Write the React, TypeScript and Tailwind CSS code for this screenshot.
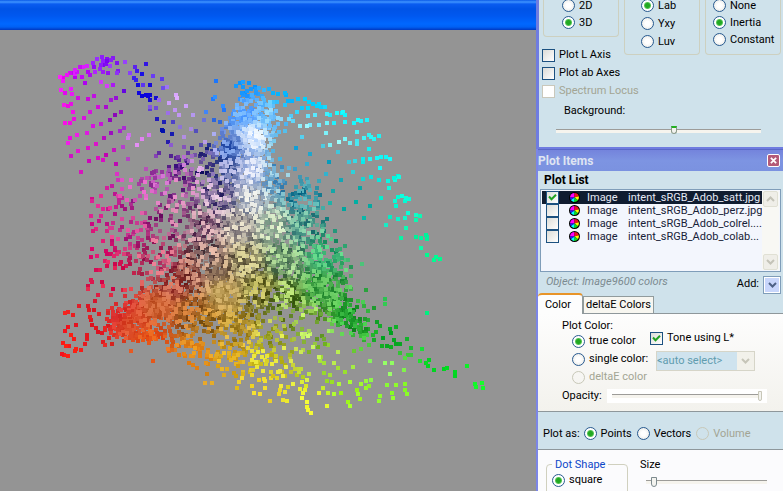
import { useId, useState } from "react";
import type { ReactNode } from "react";

/* ---------- colour cloud ---------- */

// x, y, dark tone, light tone found around that spot of the gamut
type Anchor = [number, number, string, string];
const anchors: Anchor[] = [
  [60, 77, "e800f0", "ff20ff"], [80, 70, "b000f0", "e020ff"], [100, 60, "7a00f0", "9a30ff"], [120, 70, "7000e8", "a050ff"],
  [65, 120, "f000e0", "ff20f0"], [90, 112, "d000d8", "d810e0"], [120, 112, "8000b0", "a010c8"], [110, 84, "9000f0", "f050ff"],
  [140, 80, "0808e0", "8850ff"], [146, 92, "0000d8", "1000e0"], [157, 110, "0000b8", "c080f0"], [176, 100, "d8a0ff", "e0b0ff"],
  [163, 131, "0008a0", "0010b0"], [190, 130, "001898", "f0b8ff"], [176, 158, "200070", "c070d8"], [145, 140, "e080f0", "f0a0ff"],
  [215, 100, "1870ff", "3090ff"], [243, 82, "0090ff", "20a0ff"], [245, 112, "4090ff", "80c0ff"], [253, 138, "b0d0ff", "ffffff"],
  [230, 150, "1840a0", "80a8f0"], [228, 168, "203880", "c8c8f0"], [205, 165, "080858", "f0b8f8"], [272, 115, "58b0f8", "a0e0ff"], [285, 95, "00b0ff", "10c0ff"], [310, 103, "00c8ff", "00e0ff"],
  [345, 115, "00f0ff", "20ffff"], [310, 125, "70e8ff", "a0f8ff"], [290, 150, "0090d0", "10a0d8"], [330, 155, "0098b8", "20a8d0"],
  [335, 143, "80ffff", "a0ffff"], [380, 160, "00f0f0", "20ffff"], [350, 205, "009898", "00b8a8"], [400, 198, "00f8d0", "10ffe0"],
  [425, 237, "00f098", "10ffb0"], [438, 260, "00f888", "00ff98"], [300, 195, "006080", "60b8c0"], [278, 178, "3078b0", "b0e0f0"],
  [252, 170, "90a8e0", "f8f8ff"], [250, 200, "7080a0", "f8f8f0"], [218, 195, "201858", "f0d0e8"], [182, 182, "400868", "f090c8"],
  [145, 185, "802088", "f070d0"], [160, 178, "802088", "e080e0"], [100, 160, "c000b0", "e010c8"], [95, 205, "c80088", "e83098"], [92, 250, "d80068", "f03080"],
  [130, 225, "a01078", "f060a8"], [170, 218, "600058", "f0a0c0"], [200, 225, "401840", "f0c0c8"], [160, 260, "900848", "f08098"],
  [110, 280, "d00048", "f03058"], [65, 340, "f01020", "ff2010"], [95, 325, "d81020", "e82020"], [118, 310, "d02020", "e84040"], [132, 322, "d03818", "e86840"],
  [160, 308, "b84818", "e07848"], [150, 342, "e04010", "f07020"], [175, 285, "801818", "e08068"], [192, 275, "501010", "e0a088"], [208, 258, "382830", "f0c0b0"],
  [215, 270, "503830", "d8b890"], [222, 292, "a08038", "d8b870"], [190, 310, "703808", "e08840"], [240, 225, "686068", "f0e8d0"], [275, 225, "688878", "e8f8d0"],
  [303, 225, "106068", "90d8b0"], [245, 262, "504830", "e8e0a0"], [285, 260, "386048", "b8e8a0"], [325, 255, "108858", "68e090"],
  [260, 290, "404008", "d8d070"], [285, 300, "305008", "c8f080"], [322, 288, "188028", "70d068"], [350, 318, "088018", "50d858"], [390, 342, "00a020", "10b020"],
  [440, 370, "00d020", "00e020"], [480, 385, "00f020", "20ff30"], [205, 322, "704808", "e8a840"], [195, 355, "e07810", "f0a020"],
  [235, 330, "806008", "e8c050"], [230, 360, "d09810", "f8c830"], [265, 360, "c0b010", "f0f040"], [275, 340, "788010", "e8f058"], [260, 390, "f0d020", "f8e838"],
  [310, 405, "f0f020", "f8ff40"], [310, 325, "508018", "d0ff70"], [350, 395, "98f010", "a8ff30"], [400, 392, "80f820", "98ff30"],
  [330, 365, "78c810", "d0f860"], [385, 365, "90ff60", "a0ff70"], [427, 313, "00f080", "00f080"],
];

// x, y, spread x, spread y, rise per unit x, number of dots
type Cloud = [number, number, number, number, number, number];
const clouds: Cloud[] = [
  [247, 96, 6, 7, 0, 20], [257, 110, 12, 10, 0, 62], [272, 122, 6, 11, 0, 24], [251, 136, 12, 14, 0, 165],
  [230, 145, 9, 18, -0.5, 60], [249, 160, 14, 16, 0, 130], [252, 182, 20, 14, 0, 130], [228, 165, 12, 18, 0, 50],
  [212, 185, 18, 18, -0.3, 60], [190, 162, 20, 6, -0.45, 36], [158, 179, 18, 6, -0.2, 28], [175, 208, 34, 24, 0, 85],
  [212, 218, 22, 22, 0, 130], [250, 212, 26, 18, 0, 200], [296, 200, 15, 16, 0, 75], [292, 228, 21, 17, 0, 115],
  [250, 240, 33, 18, 0, 230], [212, 258, 24, 20, 0, 155], [262, 265, 36, 16, 0, 220], [312, 262, 22, 18, 0, 105],
  [232, 286, 30, 16, 0, 200], [220, 291, 12, 12, 0, 120], [287, 286, 30, 14, 0, 180], [322, 292, 18, 15, 0, 90],
  [183, 278, 24, 18, 0, 130], [150, 310, 22, 9, -0.35, 160], [130, 322, 15, 9, -0.2, 75], [122, 308, 11, 12, 0, 16],
  [163, 303, 14, 10, 0, 105], [196, 312, 24, 13, 0, 95], [236, 318, 26, 11, 0, 80], [330, 308, 21, 10, 0.3, 75],
  [355, 326, 14, 6, 0.5, 20], [150, 258, 28, 26, 0, 62], [135, 232, 26, 28, 0, 32], [125, 207, 20, 16, 0, 10],
  [140, 335, 20, 5, 0, 34], [180, 340, 24, 10, 0.3, 46], [208, 356, 24, 12, 0.2, 46], [256, 342, 27, 13, 0, 72],
  [262, 362, 26, 12, 0.2, 60], [300, 330, 24, 10, 0, 30], [280, 382, 28, 10, 0.3, 12], [320, 350, 20, 10, 0, 8],
  [107, 66, 12, 5, 0, 10], [76, 74, 10, 3, -0.4, 4], [142, 83, 10, 8, 0.7, 4],
];

// isolated samples: x, y, x, y, ...
const singles: number[] = [
  60,77,63,78,67,75,70,73,73,73,77,72,80,67,83,67,87,66,93,63,97,59,102,57,107,61,111,60,75,77,82,77,90,75,95,72,100,69,103,65,108,73,117,73,
  125,62,146,64,130,73,135,67,142,74,136,80,138,85,143,85,150,85,153,76,162,79,163,88,167,87,85,83,101,82,107,86,113,85,124,91,61,90,65,93,
  71,89,72,94,78,98,88,99,94,96,111,100,116,98,64,105,68,106,71,104,73,112,90,112,98,107,106,107,115,115,121,112,74,119,84,118,65,123,70,123,
  110,120,101,124,93,126,87,133,77,135,70,138,68,143,104,138,111,133,120,131,124,128,129,135,142,139,149,135,128,138,137,145,96,144,88,148,
  78,151,71,156,98,158,106,155,114,150,123,147,89,161,103,160,128,159,116,164,81,172,139,93,142,96,146,95,148,96,150,107,150,109,156,108,156,98,159,100,
  169,103,176,95,177,98,175,110,168,113,157,119,164,122,173,122,179,115,186,106,193,115,180,127,191,129,196,131,163,131,162,130,172,134,184,137,
  168,142,171,145,184,147,192,148,176,158,178,157,171,156,159,153,156,156,216,81,213,99,215,97,223,106,224,110,206,112,204,120,214,120,234,111,
  236,86,205,142,201,145,118,180,117,174,131,180,107,188,112,186,122,189,115,194,118,196,101,196,92,199,98,206,
  236,86,243,82,240,83,249,83,255,87,259,88,264,90,269,89,273,93,278,94,285,93,286,95,288,101,292,101,298,99,305,99,309,102,313,104,317,106,
  321,107,325,107,319,104,285,105,302,108,308,108,297,112,291,116,289,119,293,121,286,124,300,126,307,126,310,125,319,125,327,123,334,123,
  308,116,315,115,327,114,330,115,337,113,342,113,345,115,343,112,345,122,354,123,358,120,361,121,367,120,357,132,364,138,369,135,371,137,374,139,
  379,136,357,141,357,144,350,143,345,139,339,142,330,145,323,146,326,133,302,137,285,131,296,148,310,154,338,152,369,149,329,162,307,164,
  349,162,355,161,363,159,363,162,370,159,377,158,381,157,386,157,390,159,380,168,353,172,326,174,295,169,289,168,319,181,301,181,341,180,
  363,179,371,177,379,180,388,181,394,178,398,176,395,180,399,177,389,188,360,188,333,191,320,195,381,198,330,203,356,202,370,206,344,209,318,206,
  396,206,395,201,398,197,402,196,406,198,409,199,405,201,364,218,390,217,398,219,405,218,408,213,416,215,420,216,416,220,386,225,406,228,
  401,238,416,237,421,238,427,237,427,239,426,235,421,248,427,255,434,260,436,257,440,259,324,225,324,231,335,231,345,246,331,239,362,264,
  351,267,332,250,427,313,385,299,385,304,374,308,363,302,366,290,354,310,365,319,377,322,380,326,390,329,396,327,391,333,376,332,366,329,
  351,333,360,332,367,335,364,340,374,340,383,338,394,340,400,344,396,344,391,347,387,346,382,346,369,345,361,349,407,339,411,348,422,349,
  400,353,405,358,408,355,411,355,420,361,426,363,429,360,428,366,434,370,444,369,447,368,455,372,455,376,467,366,475,384,476,387,482,383,
  483,388,354,351,338,352,370,361,385,363,392,363,404,370,390,374,387,385,396,385,405,384,405,390,407,394,392,393,393,398,380,396,379,401,
  371,380,366,381,361,384,369,386,366,388,357,390,358,394,360,399,350,382,341,393,334,394,328,393,323,388,319,393,332,382,339,384,345,372,
  338,368,353,367,324,373,330,375,334,363,320,361,319,357,324,363,327,406,348,402,350,406,307,402,307,407,308,410,311,413,302,398,305,390,
  300,389,306,386,303,377,309,374,288,387,280,390,279,394,283,400,287,401,270,401,260,394,254,393,237,388,239,382,259,380,252,386,212,383,205,383,
  62,354,64,355,68,356,75,351,76,349,81,350,63,343,66,346,69,346,74,339,71,335,87,335,87,339,85,344,65,331,68,327,76,325,73,315,65,313,68,312,
  79,306,88,306,95,301,98,295,88,286,88,289,91,280,92,282,102,282,96,270,100,270,107,266,91,257,97,256,92,249,106,251,114,256,120,264,112,244,
  103,241,112,237,93,231,92,224,91,216,101,216,99,221,92,201,103,209,110,208,116,207,107,231,112,228,113,223,115,214,119,252,118,239,125,249,
  130,244,128,230,133,234,89,310,94,310,90,317,91,320,92,325,96,328,98,332,102,333,99,314,103,342,105,345,112,344,131,351,153,361,
];

function makeRandom(seed: number) {
  let s = seed;
  return () => {
    s = (s * 1664525 + 1013904223) % 4294967296;
    return s / 4294967296;
  };
}

const channels = (hex: string) => [0, 2, 4].map((i) => parseInt(hex.slice(i, i + 2), 16));
const parsed = anchors.map(([x, y, dark, light]) => ({ x, y, dark: channels(dark), light: channels(light) }));

function tone(x: number, y: number, t: number, soft: number) {
  const sum = [0, 0, 0];
  let total = 0;
  for (const a of parsed) {
    const d = (a.x - x) ** 2 + (a.y - y) ** 2 + soft;
    const w = 1 / (d * d);
    total += w;
    for (let i = 0; i < 3; i++) sum[i] += w * (a.dark[i] + (a.light[i] - a.dark[i]) * t);
  }
  return `rgb(${sum.map((v) => Math.round(v / total)).join(",")})`;
}

type Dot = { x: number; y: number; fill: string; depth: number };

function buildDots(): Dot[] {
  const rnd = makeRandom(9600);
  const bell = () => (rnd() + rnd() - 1) * 1.9;
  const dots: Dot[] = [];
  const crowded = (x: number, y: number) => dots.some((d) => Math.abs(d.x - x) < 2 && Math.abs(d.y - y) < 2);
  for (let i = 0; i < singles.length; i += 2) {
    const t = rnd();
    dots.push({ x: singles[i], y: singles[i + 1], fill: tone(singles[i], singles[i + 1], t, 12), depth: rnd() + t * 0.6 });
  }
  for (const [cx, cy, sx, sy, slope, n] of clouds) {
    for (let i = 0; i < n; i++) {
      let x = 0;
      let y = 0;
      for (let attempt = 0; attempt < 5; attempt++) {
        const dx = bell() * sx;
        x = Math.round(cx + dx);
        y = Math.round(cy + bell() * sy + dx * slope);
        if (!crowded(x, y)) break;
      }
      const bright = rnd() < 0.2;
      const t = bright ? 0.85 + rnd() * 0.15 : rnd() * 0.7;
      dots.push({ x, y, fill: tone(x, y, t, 60), depth: rnd() + (bright ? 0.7 : t * 0.3) });
    }
  }
  return dots.sort((a, b) => a.depth - b.depth);
}

const dots = buildDots();

function GamutPlot() {
  return (
    <svg width="500" height="430" viewBox="0 30 500 430" shapeRendering="crispEdges" role="img" aria-label="Gamut plot" className="block">
      {dots.map((d, i) => (
        <rect key={i} x={d.x - 2} y={d.y - 2} width="4" height="4" fill={d.fill} />
      ))}
    </svg>
  );
}

/* ---------- controls ---------- */

function Radio({ name, label, checked, disabled }: { name: string; label: string; checked?: boolean; disabled?: boolean }) {
  return (
    <label className={`flex items-center gap-1 whitespace-nowrap ${disabled ? "text-[#a3a594]" : ""}`}>
      <input
        type="radio"
        name={name}
        defaultChecked={checked}
        disabled={disabled}
        className="size-[13px] shrink-0 appearance-none rounded-full border border-[#285a90] bg-[radial-gradient(circle,#fff_30%,#e4e4de)] checked:bg-[radial-gradient(circle,#22a822_0_2px,#55c455_3px,#fff_4px)] disabled:border-[#c8c8b8] disabled:bg-none"
      />
      {label}
    </label>
  );
}

function Tick({ label, checked, disabled }: { label: ReactNode; checked?: boolean; disabled?: boolean }) {
  const [on, setOn] = useState(!!checked);
  return (
    <label className={`flex items-center gap-1 whitespace-nowrap ${disabled ? "text-[#a3a594]" : ""}`}>
      <span className="relative flex size-[13px] shrink-0">
        <input
          type="checkbox"
          checked={on}
          disabled={disabled}
          onChange={(e) => setOn(e.target.checked)}
          className="size-[13px] appearance-none border border-[#1c5180] bg-linear-to-br from-[#dcdcd7] to-white disabled:border-[#cac8bb] disabled:from-white"
        />
        {on && (
          <svg viewBox="0 0 13 13" className="pointer-events-none absolute inset-0" fill="none" stroke="#21a121" strokeWidth="2">
            <path d="M3 5.5l2.500 2.700L10 3.700" />
          </svg>
        )}
      </span>
      {label}
    </label>
  );
}

function Chevron({ color = "#4d6185", up = false }: { color?: string; up?: boolean }) {
  return (
    <svg width="9" height="6" viewBox="0 0 9 6" fill="none" stroke={color} strokeWidth="2">
      <path d={up ? "M1 5l3.5-3.5L8 5" : "M1 1l3.5 3.5L8 1"} />
    </svg>
  );
}

const slider =
  "h-3 appearance-none bg-transparent [&::-webkit-slider-runnable-track]:h-1 [&::-webkit-slider-runnable-track]:border-t [&::-webkit-slider-runnable-track]:border-[#9d9c99] [&::-webkit-slider-runnable-track]:bg-[#f6f4ee] [&::-webkit-slider-thumb]:appearance-none [&::-webkit-slider-thumb]:-mt-1 [&::-webkit-slider-thumb]:rounded-b-full [&::-webkit-slider-thumb]:border [&::-webkit-slider-thumb]:bg-[#f3f3ef]";

function ColorWheel() {
  return (
    <svg width="11" height="11" viewBox="0 0 11 11" className="shrink-0" aria-hidden="true">
      <circle cx="5.5" cy="5.5" r="5.5" fill="#000" />
      <path d="M5.500 5.500L1 5.500A4.500 4.500 0 0 1 5.500 1Z" fill="#f0f" />
      <path d="M5.500 5.500L5.500 1A4.500 4.500 0 0 1 9.800 4.200Z" fill="#f01020" />
      <path d="M5.500 5.500L9.800 4.200A4.500 4.500 0 0 1 9 8.300Z" fill="#ff0" />
      <path d="M5.500 5.500L9 8.300A4.500 4.500 0 0 1 5 10Z" fill="#10e020" />
      <path d="M5.500 5.500L5 10A4.500 4.500 0 0 1 1.800 8Z" fill="#0ff" />
      <path d="M5.500 5.500L1.800 8A4.500 4.500 0 0 1 1 5.500Z" fill="#22f" />
    </svg>
  );
}

const items = [
  { file: "intent_sRGB_Adob_satt.jpg", on: true },
  { file: "intent_sRGB_Adob_perz.jpg", on: false },
  { file: "intent_sRGB_Adob_colrel....", on: false },
  { file: "intent_sRGB_Adob_colab...", on: false },
];

/* ---------- panels ---------- */

function ViewPanel() {
  return (
    <section className="h-[149px] border-b-2 border-l-3 border-[#6f7ce0] bg-[#cfe2eb] pl-[3px]">
      <div className="flex items-start gap-[5px] pl-px leading-[13px]">
        <fieldset className="h-[37px] w-[76px] rounded-b border border-t-0 border-[#cdd0c0] pl-[18px]">
          <div className="-mt-px flex flex-col gap-1">
            <Radio name="dim" label="2D" />
            <Radio name="dim" label="3D" checked />
          </div>
        </fieldset>
        <fieldset className="h-[55px] w-[76px] rounded-b border border-t-0 border-[#cdd0c0] pl-4">
          <div className="-mt-px flex flex-col gap-[5px]">
            <Radio name="space" label="Lab" checked />
            <Radio name="space" label="Yxy" />
            <Radio name="space" label="Luv" />
          </div>
        </fieldset>
        <fieldset className="h-[55px] w-[76px] rounded-b border border-t-0 border-[#cdd0c0] pl-[7px]">
          <div className="-mt-px flex flex-col gap-1">
            <Radio name="motion" label="None" />
            <Radio name="motion" label="Inertia" checked />
            <Radio name="motion" label="Constant" />
          </div>
        </fieldset>
      </div>
      <div className="-mt-2 flex w-fit flex-col gap-[2px]">
        <Tick label="Plot L Axis" />
        <Tick label="Plot ab Axes" />
        <Tick label="Spectrum Locus" disabled />
      </div>
      <label className="mt-1 flex flex-col gap-1">
        <span className="pl-[22px]">Background:</span>
        <input
          type="range"
          defaultValue={58}
          className={`${slider} ml-[14px] w-[205px] [&::-webkit-slider-runnable-track]:mt-1 [&::-webkit-slider-thumb]:h-2 [&::-webkit-slider-thumb]:w-[6px] [&::-webkit-slider-thumb]:border-t-2 [&::-webkit-slider-thumb]:border-[#8a9a8a] [&::-webkit-slider-thumb]:border-t-[#21b121]`}
        />
      </label>
    </section>
  );
}

function PlotList() {
  return (
    <div className="h-[123px] bg-[#cfe2eb] pl-[2px]">
      <h2 className="pl-1 text-xs leading-[18px] font-bold">Plot List</h2>
      <div className="flex h-[83px] w-[241px] border border-[#7f9db9] bg-[#f3f6fd] p-px">
        <ul className="min-w-0 flex-1">
          {items.map((it, i) => (
            <li key={it.file} className={`flex h-[13px] items-center pl-1 ${i === 0 ? "bg-[#101c30] text-[#e4e8f4]" : "text-[#182238]"}`}>
              <Tick
                checked={it.on}
                label={
                  <>
                    <span className="ml-[6px] flex">
                      <ColorWheel />
                    </span>
                    <span className="ml-[3px] w-[37px]">Image</span>
                    {it.file}
                  </>
                }
              />
            </li>
          ))}
        </ul>
        <div className="flex w-[17px] shrink-0 flex-col items-center justify-between bg-[#f8f8f4]">
          <button aria-label="Scroll up" className="grid h-4 w-[15px] place-items-center rounded-xs border border-[#e0e0d4] bg-[#efeee8]">
            <Chevron color="#c4c3b8" up />
          </button>
          <button aria-label="Scroll down" className="grid h-4 w-[15px] place-items-center rounded-xs border border-[#e0e0d4] bg-[#efeee8]">
            <Chevron color="#c4c3b8" />
          </button>
        </div>
      </div>
      <div className="flex items-start justify-between pr-[2px] pl-[6px]">
        <em className="pt-[2px] text-[#7c8a90]">Object: Image9600 colors</em>
        <div className="flex items-start gap-1 pt-1">
          <span>Add:</span>
          <button aria-label="Add item" className="grid h-[18px] w-[18px] place-items-center border border-[#7f9db9] bg-[#c8d6fb] shadow-[inset_0_0_0_1px_#fff]">
            <Chevron />
          </button>
        </div>
      </div>
    </div>
  );
}

function ColorTab() {
  const pick = useId();
  const opacity = useId();
  return (
    <div className="h-[98px] border-b border-[#8e979b] bg-linear-to-b from-[#fdfdfd] to-[#f3f2ed] pt-1 pl-6">
      <div className="flex">
        <fieldset>
          <legend className="leading-[15px]">Plot Color:</legend>
          <div className="flex flex-col gap-[2px] pl-[10px]">
            <Radio name="tone" label="true color" checked />
            <Radio name="tone" label="single color:" />
            <Radio name="tone" label="deltaE color" disabled />
          </div>
        </fieldset>
        <div className="ml-auto w-[133px] pt-3">
          <Tick label="Tone using L*" checked />
          <div className="relative mt-[5px] ml-[6px] w-[99px]">
            <label htmlFor={pick} className="sr-only">
              Single color
            </label>
            <select id={pick} disabled className="h-[20px] w-full appearance-none border border-[#d6d5c8] bg-[#cfe3ee] text-[#5f9cae] opacity-100">
              <option>&lt;auto select&gt;</option>
            </select>
            <span className="pointer-events-none absolute inset-y-px right-px grid w-[17px] place-items-center bg-[#f2f1ea]">
              <Chevron color="#c6c5b8" />
            </span>
          </div>
        </div>
      </div>
      <div className="flex items-center gap-[5px] pt-[3px]">
        <label htmlFor={opacity}>Opacity:</label>
        <div className="flex h-[14px] w-[160px] items-center bg-white px-[5px]">
          <input
            id={opacity}
            type="range"
            defaultValue={100}
            className={`${slider} w-full [&::-webkit-slider-thumb]:h-[10px] [&::-webkit-slider-thumb]:w-1 [&::-webkit-slider-thumb]:border-[#c8c7b8]`}
          />
        </div>
      </div>
    </div>
  );
}

function PlotItems() {
  const size = useId();
  return (
    <section className="flex min-h-0 flex-1 flex-col border-l-2 border-[#7c86e6]">
      <header className="flex h-[22px] shrink-0 items-center justify-between border-t border-[#5a68c8] bg-linear-to-b from-[#7484dc] via-[#7d94e2] to-[#7b92e0] pr-[3px]">
        <h1 className="text-xs font-bold text-[#dfe4f2]">Plot Items</h1>
        <button aria-label="Close" className="grid size-[13px] place-items-center rounded-xs border border-white bg-[#b45a78]">
          <svg width="7" height="7" viewBox="0 0 8 8" stroke="#fff" strokeWidth="2">
            <path d="M1 1l6 6M7 1L1 7" />
          </svg>
        </button>
      </header>
      <PlotList />
      <div role="tablist" className="flex h-[20px] shrink-0 items-end border-b border-[#8e979b] bg-[#cfe2eb]">
        <button role="tab" aria-selected="true" className="-mb-px h-[21px] w-[45px] rounded-t-sm border-t-2 border-r border-t-[#e89428] border-r-[#919b9c] bg-[#fdfdfd] pr-1">
          Color
        </button>
        <button role="tab" aria-selected="false" className="h-[17px] w-[71px] border border-b-0 border-[#919b9c] bg-[#f7f6f0]">
          deltaE Colors
        </button>
      </div>
      <ColorTab />
      <div className="flex h-[38px] shrink-0 items-center gap-1 border-b border-[#8e979b] bg-[#cfe2eb] pt-[6px] pl-[5px]">
        <span>Plot as:</span>
        <div className="flex gap-[5px]">
          <Radio name="kind" label="Points" checked />
          <Radio name="kind" label="Vectors" />
          <Radio name="kind" label="Volume" disabled />
        </div>
      </div>
      <div className="flex min-h-0 flex-1 items-start gap-3 overflow-hidden bg-[#fbfbfd] pt-[7px] pl-2">
        <fieldset className="h-[60px] w-[82px] shrink-0 rounded border border-[#d0d0bf] pl-[5px]">
          <legend className="px-[3px] leading-[15px] text-[#0c46c8]">Dot Shape</legend>
          <Radio name="shape" label="square" checked />
        </fieldset>
        <div className="flex flex-col gap-1">
          <label htmlFor={size} className="leading-[15px]">
            Size
          </label>
          <input
            id={size}
            type="range"
            defaultValue={4}
            className={`${slider} ml-[6px] w-[121px] [&::-webkit-slider-thumb]:h-[10px] [&::-webkit-slider-thumb]:w-[6px] [&::-webkit-slider-thumb]:border-[#7d8a8e]`}
          />
        </div>
      </div>
    </section>
  );
}

export default function App() {
  return (
    <div className="flex h-screen overflow-hidden bg-[#949494] font-[Roboto,'Liberation_Sans',sans-serif] text-[11px] leading-4 text-black">
      <main className="min-w-0 flex-1">
        <div className="h-[30px] bg-[linear-gradient(#0a5ae8_0,#3f94ff_2px,#0a5cf0_4px,#0053e6_9px,#0058f0_16px,#0068ff_24px,#0060f4_27px,#0038c0_30px)]" />
        <GamutPlot />
      </main>
      <aside className="flex w-[247px] shrink-0 flex-col">
        <ViewPanel />
        <PlotItems />
      </aside>
    </div>
  );
}
